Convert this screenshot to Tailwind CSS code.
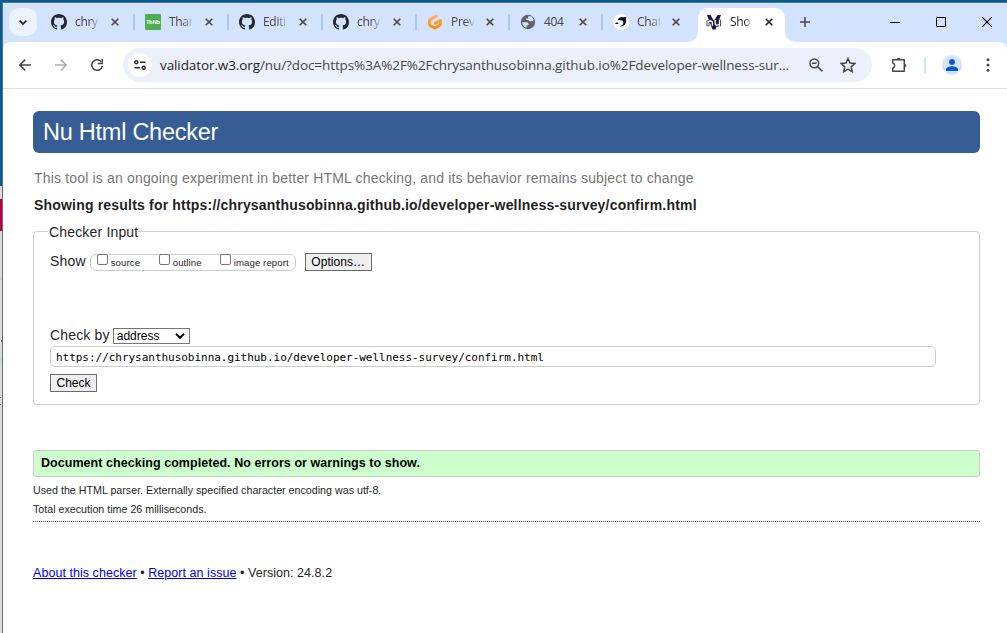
<!DOCTYPE html>
<html lang="en">
<head>
<meta charset="utf-8">
<title>Nu Html Checker</title>
<script src="https://cdn.jsdelivr.net/npm/@tailwindcss/browser@4"></script>
</head>
<body class="w-[1007px] h-[633px] overflow-hidden bg-[#005f96] flex flex-col">
<svg class="hidden">
  <symbol id="gh" viewBox="0 0 16 16"><path fill="#24292f" d="M8 0C3.58 0 0 3.58 0 8c0 3.54 2.29 6.53 5.47 7.59.4.07.55-.17.55-.38 0-.19-.01-.82-.01-1.49-2.01.37-2.53-.49-2.69-.94-.09-.23-.48-.94-.82-1.13-.28-.15-.68-.52-.01-.53.63-.01 1.08.58 1.23.82.72 1.21 1.87.87 2.33.66.07-.52.28-.87.51-1.07-1.78-.2-3.64-.89-3.64-3.95 0-.87.31-1.59.82-2.15-.08-.2-.36-1.02.08-2.12 0 0 .67-.21 2.2.82.64-.18 1.32-.27 2-.27s1.36.09 2 .27c1.53-1.04 2.2-.82 2.2-.82.44 1.1.16 1.92.08 2.12.51.56.82 1.27.82 2.15 0 3.07-1.87 3.75-3.65 3.95.29.25.54.73.54 1.48 0 1.07-.01 1.93-.01 2.2 0 .21.15.46.55.38A8.01 8.01 0 0 0 16 8c0-4.42-3.58-8-8-8z"/></symbol>
  <symbol id="x" viewBox="0 0 8 8"><path d="M.7.7l6.6 6.6M7.3.7L.7 7.3" stroke="currentColor" stroke-width="1.6" fill="none"/></symbol>
</svg>

<div class="h-[2px] shrink-0"></div>
<div class="flex flex-1 min-h-0">
  <!-- sliver of the window behind -->
  <div class="w-[2px] shrink-0 flex flex-col bg-[#dcdcdc]">
    <div class="h-[184px] bg-[#005f96]"></div>
    <div class="h-[13px] bg-[#dcdcdc]"></div>
    <div class="h-8 bg-[#b00048]"></div>
    <div class="h-[47px]"></div>
    <div class="h-[2px] bg-[#cfcfcf]"></div>
    <div class="h-[60px]"></div>
    <div class="h-[2px] bg-[#8a6a30] ml-px"></div>
    <div class="h-[16px]"></div>
    <div class="h-[6px] bg-[#c4dcdc]"></div>
    <div class="h-[33px]"></div>
    <div class="h-px w-px bg-[#2a7ad0]"></div>
    <div class="h-[6px]"></div>
    <div class="h-px w-px bg-[#2a7ad0]"></div>
  </div>

  <div class="flex-1 min-w-0 flex flex-col border-l border-t border-[#6b6b6b] bg-white font-['Open_Sans','Noto_Sans',sans-serif]">
    <!-- tab strip -->
    <div class="h-[39px] shrink-0 bg-[#d3e2fd] flex items-start text-[12px] tracking-[-0.3px] text-[#474747]">
      <div class="w-7 h-7 mt-[5px] ml-[6px] rounded-[10px] bg-[#ecf2fe] flex items-center justify-center">
        <svg class="w-2 h-[5px]" viewBox="0 0 8 5"><path d="M.6.7L4 4 7.4.7" fill="none" stroke="#1f1f1f" stroke-width="1.7"/></svg>
      </div>
      <div class="flex h-[39px] pl-[6px]">
        <div class="w-[94px] h-[38px] flex items-center pl-2 pr-[2px]"><svg class="w-4 h-4"><use href="#gh"/></svg><span class="w-[23px] ml-2 whitespace-nowrap mask-r-from-60% mask-r-to-110%">chry</span><svg class="w-2 h-2 ml-[13px]"><use href="#x"/></svg><i class="w-[2px] h-4 ml-auto bg-[#a8c7fa]"></i></div>
        <div class="w-[94px] h-[38px] flex items-center pl-2 pr-[2px]"><span class="w-4 h-4 bg-[#4caf50] rounded-[1px] text-white text-[5.5px] font-bold flex items-center justify-center">ThNb</span><span class="w-[23px] ml-2 whitespace-nowrap mask-r-from-60% mask-r-to-110%">Thar</span><svg class="w-2 h-2 ml-[13px]"><use href="#x"/></svg><i class="w-[2px] h-4 ml-auto bg-[#a8c7fa]"></i></div>
        <div class="w-[94px] h-[38px] flex items-center pl-2 pr-[2px]"><svg class="w-4 h-4"><use href="#gh"/></svg><span class="w-[23px] ml-2 whitespace-nowrap mask-r-from-60% mask-r-to-110%">Editi</span><svg class="w-2 h-2 ml-[13px]"><use href="#x"/></svg><i class="w-[2px] h-4 ml-auto bg-[#a8c7fa]"></i></div>
        <div class="w-[94px] h-[38px] flex items-center pl-2 pr-[2px]"><svg class="w-4 h-4"><use href="#gh"/></svg><span class="w-[23px] ml-2 whitespace-nowrap mask-r-from-60% mask-r-to-110%">chry</span><svg class="w-2 h-2 ml-[13px]"><use href="#x"/></svg><i class="w-[2px] h-4 ml-auto bg-[#a8c7fa]"></i></div>
        <div class="w-[93px] h-[38px] flex items-center pl-2 pr-[2px]"><svg class="w-4 h-4" viewBox="0 0 16 16"><defs><linearGradient id="o" x1="0" x2="0" y1="0" y2="1"><stop stop-color="#ffb45b"/><stop offset="1" stop-color="#ff8a00"/></linearGradient></defs><path d="M9.4 1.9L3.4 5.2Q2.3 5.8 2.3 7v3.2q0 .9.8 1.4l3.6 2q1 .5 2 0l3.8-2.1q.9-.5.9-1.4V6.4L8.3 9.2" fill="none" stroke="url(#o)" stroke-width="2.9" stroke-linecap="round" stroke-linejoin="round"/></svg><span class="w-[23px] ml-2 whitespace-nowrap mask-r-from-60% mask-r-to-110%">Prev</span><svg class="w-2 h-2 ml-[12px]"><use href="#x"/></svg><i class="w-[2px] h-4 ml-auto bg-[#a8c7fa]"></i></div>
        <div class="w-[93px] h-[38px] flex items-center pl-2 pr-[2px]"><svg class="w-4 h-4" viewBox="0 0 16 16"><circle cx="8" cy="8" r="7.2" fill="#5f6368"/><path d="M8.2 2.2h3.2l2.4 3.5-1.2 1.6-2.8-.1-1.5-1.1H6.1V4.6h2zM2.1 8.2l5.2.1 1.3 1.5-.2 1.4-1.9.2v2.3l-2.1-.8-1.8-2.4z" fill="#d3e2fd"/></svg><span class="w-[23px] ml-2 whitespace-nowrap">404</span><svg class="w-2 h-2 ml-[12px]"><use href="#x"/></svg><i class="w-[2px] h-4 ml-auto bg-[#a8c7fa]"></i></div>
        <div class="w-[93px] h-[38px] flex items-center pl-2"><svg class="w-4 h-4" viewBox="0 0 16 16"><circle cx="8" cy="8" r="8" fill="#fff"/><path d="M5 6.2Q5.2 3.4 8.3 3.2L13.6 3 12.8 4.6Q14 7 12.6 9.6 11 12.6 6.6 12.6q3.6-1.2 3.8-4Q10.4 6.2 8 6.2z" fill="#0c0a35"/><path d="M1.8 9.8l1.6-1.3h1.8v1.6H3.6z" fill="#0c0a35"/></svg><span class="w-[23px] ml-2 whitespace-nowrap mask-r-from-60% mask-r-to-110%">Chat</span><svg class="w-2 h-2 ml-[12px]"><use href="#x"/></svg></div>
        <!-- active tab -->
        <div class="w-[87px] h-[34px] mt-[5px] bg-white rounded-t-[10px] flex items-start pt-[6px] pl-2 relative text-[#1f1f1f]">
          <svg class="absolute -left-[10px] bottom-0 w-[10px] h-[10px]" viewBox="0 0 10 10"><path d="M10 0v10H0A10 10 0 0 0 10 0z" fill="#fff"/></svg>
          <svg class="absolute -right-[10px] bottom-0 w-[10px] h-[10px]" viewBox="0 0 10 10"><path d="M0 0v10h10A10 10 0 0 1 0 0z" fill="#fff"/></svg>
          <svg class="w-4 h-4" viewBox="0 0 16 16"><path d="M1 1h3.5L8 7l3.5-6H15L9.5 15.5h-3z" fill="#191650"/><path d="M2 12.2V6.6m0 1.6q1-1.2 2.6-1.2 1.8.2 1.8 1.8v3.4M9.2 5.8v3.8q0 1.6 1.6 1.6t2.8-1.4m0-4v6.4" fill="none" stroke="#26263a" stroke-width="2.9"/><path d="M2 11.7V6.8m0 1.4q1-1.2 2.6-1.2 1.8.2 1.8 1.8v2.9M9.2 6v3.6q0 1.6 1.6 1.6t2.8-1.4m0-3.8v5.7" fill="none" stroke="#fff" stroke-width="1.3"/></svg>
          <span class="w-[23px] ml-2 leading-4 whitespace-nowrap mask-r-from-60% mask-r-to-110%">Sho</span><svg class="w-2 h-2 ml-3 mt-1"><use href="#x"/></svg>
        </div>
      </div>
      <svg class="w-[10px] h-[10px] mt-[14px] ml-[15px]" viewBox="0 0 10 10"><path d="M5 0v10M0 5h10" stroke="#474747" stroke-width="1.5"/></svg>
      <div class="flex items-center h-[38px] ml-auto pr-[15px] gap-[36px]">
        <svg class="w-[10px] h-[10px]" viewBox="0 0 10 10"><path d="M0 5.5h10" stroke="#000"/></svg>
        <svg class="w-[10px] h-[10px]" viewBox="0 0 10 10"><path d="M.5.5h9v9h-9z" fill="none" stroke="#000"/></svg>
        <svg class="w-[10px] h-[10px]" viewBox="0 0 10 10"><path d="M0 0l10 10M10 0L0 10" stroke="#000" stroke-width="1.1"/></svg>
      </div>
    </div>

    <!-- toolbar -->
    <div class="bg-[#d3e2fd] shrink-0">
    <div class="h-[47px] bg-white rounded-t-[8px] border-b border-[#dfe1e5] flex items-center">
      <svg class="w-3 h-3 ml-4" viewBox="0 0 12 12"><path d="M6.2.6L.9 6l5.3 5.4M1 6h11" fill="none" stroke="#474747" stroke-width="1.5"/></svg>
      <svg class="w-3 h-3 ml-6" viewBox="0 0 12 12"><path d="M5.8.6L11.1 6l-5.3 5.4M11 6H0" fill="none" stroke="#acacac" stroke-width="1.5"/></svg>
      <svg class="w-3 h-3 ml-6" viewBox="0 0 12 12"><path d="M10.3 2.8A5.3 5.3 0 1 0 11.3 7" fill="none" stroke="#474747" stroke-width="1.5"/><path d="M11.3 0v4.6H6.7" fill="none" stroke="#474747" stroke-width="1.5"/></svg>
      <div class="w-[749px] h-[34px] ml-5 rounded-full bg-[#ebf0fa] flex items-center">
        <div class="w-6 h-6 ml-[5px] rounded-full bg-white flex items-center justify-center">
          <svg class="w-3 h-[10px]" viewBox="0 0 12 10" fill="none" stroke="#2b2b2b" stroke-width="1.4"><circle cx="2.3" cy="2.2" r="1.5"/><path d="M5.8 2.2H11.5M.5 7.8h5.7"/><circle cx="9.7" cy="7.8" r="1.5"/></svg>
        </div>
        <div class="w-[632px] ml-2 text-[13.5px] tracking-[-0.095px] whitespace-nowrap text-[#474747]"><span class="text-[#1f1f1f]">validator.w3.org</span>/nu/?doc=https%3A%2F%2Fchrysanthusobinna.github.io%2Fdeveloper-wellness-sur...</div>
        <svg class="w-[14px] h-[14px] ml-[17px]" viewBox="0 0 14 14" fill="none" stroke="#474747" stroke-width="1.5"><circle cx="5.3" cy="5.3" r="4.4"/><path d="M8.5 8.5l4.9 4.9M3 5.3h4.6"/></svg>
        <svg class="w-4 h-4 ml-[17px]" viewBox="0 0 14 14"><path d="M7 1.3l1.7 4 4.3.4-3.2 2.9.9 4.2L7 10.6l-3.7 2.2.9-4.2L1 5.7l4.3-.4z" fill="none" stroke="#474747" stroke-width="1.3"/></svg>
      </div>
      <svg class="w-[17px] h-[17px] ml-[19px] -mt-px" viewBox="0 0 17 17"><path d="M1.7 3.7h11.6v11.6H1.7v-3.2q2-.6 2-2.6t-2-2.6z" fill="none" stroke="#474747" stroke-width="1.5" stroke-linejoin="round"/><path d="M5.6 3.4a2 2 0 0 1 3.8 0zM13.6 7.6a2 2 0 0 1 0 3.8z" fill="#474747" stroke="#474747" stroke-width=".5"/></svg>
      <i class="w-[2px] h-4 ml-4 bg-[#d3e2fd]"></i>
      <div class="w-5 h-5 ml-4 rounded-full bg-[#d3e2fd] flex items-center justify-center"><svg class="w-3 h-3" viewBox="0 0 12 12" fill="#0b57d0"><circle cx="6" cy="2.9" r="2.9"/><path d="M0 12v-1.8C0 8.2 3.5 7.2 6 7.2s6 1 6 3V12z"/></svg></div>
      <svg class="w-1 h-[14px] ml-6" viewBox="0 0 4 14" fill="#474747"><circle cx="2" cy="1.8" r="1.5"/><circle cx="2" cy="7" r="1.5"/><circle cx="2" cy="12.2" r="1.5"/></svg>
    </div>
    </div>

    <!-- page -->
    <main class="flex-1 pl-[30px] pr-[27px] pt-[22px] text-[#1f1f1f] font-['Liberation_Sans',Arial,sans-serif] flex flex-col items-stretch">
      <h1 class="h-[42px] rounded-[6px] bg-[#365d95] text-white text-[23.5px] tracking-[-0.25px] leading-[42px] pl-[10px]">Nu Html Checker</h1>
      <p class="mt-[17px] text-[14px] leading-4 tracking-[0.17px] text-[#767676] pl-px">This tool is an ongoing experiment in better HTML checking, and its behavior remains subject to change</p>
      <h2 class="mt-[11px] text-[14px] leading-4 font-bold tracking-[0.19px] pl-px">Showing results for https://chrysanthusobinna.github.io/developer-wellness-survey/confirm.html</h2>
      <fieldset class="mt-[11px] h-[181px] border border-[#ccc] rounded-[4px] pl-4 pr-[43px] text-[14px] tracking-[0.17px]">
        <legend class="-ml-[2px] pl-px h-[15px] leading-4">Checker Input</legend>
        <div class="flex items-center h-[19px] mt-[13px]">
          <span>Show</span>
          <div class="ml-1 mt-px w-[206px] h-[17px] border border-[#ccc] rounded-[6px] flex items-center text-[9.6px] tracking-[0.1px] pl-[6px]">
            <i class="w-[11px] h-[11px] border border-[#767676] rounded-[2px] -mt-[5px] bg-white"></i><span class="ml-[3px] mt-[2px] w-[48px]">source</span>
            <i class="w-[11px] h-[11px] border border-[#767676] rounded-[2px] -mt-[5px] bg-white"></i><span class="ml-[3px] mt-[2px] w-[47px]">outline</span>
            <i class="w-[11px] h-[11px] border border-[#767676] rounded-[2px] -mt-[5px] bg-white"></i><span class="ml-[3px] mt-[2px] whitespace-nowrap">image report</span>
          </div>
          <button class="ml-[9px] w-[67px] h-[18px] border border-[#6b6b6b] bg-[#efefef] text-black text-[12px] leading-4 tracking-[0.05px]">Options…</button>
        </div>
        <div class="flex items-center h-4 mt-[57px]">
          <span class="-mt-px">Check by</span>
          <div class="ml-[3px] w-[77px] h-4 border border-[#767676] text-black text-[12px] leading-[14px] tracking-[0px] flex items-center justify-between pl-[3px] pr-1"><span>address</span><svg class="w-[10px] h-[6px]" viewBox="0 0 10 6"><path d="M1 .8l4 4 4-4" fill="none" stroke="#000" stroke-width="2"/></svg></div>
        </div>
        <div class="mt-[2px] h-[21px] border border-[#ccc] rounded-[5px] pl-[5px] text-black font-['DejaVu_Sans_Mono',monospace] text-[11px] leading-[21px] tracking-[-0.03px]">https://chrysanthusobinna.github.io/developer-wellness-survey/confirm.html</div>
        <button class="mt-[7px] block w-[47px] h-[18px] border border-[#6b6b6b] bg-[#efefef] text-black text-[12px] leading-4 tracking-[0px]">Check</button>
      </fieldset>
      <p class="mt-[45px] h-[27px] bg-[#cfc] border border-[#ccc] rounded-[3px] pl-[7px] text-black font-bold text-[12.5px] leading-[24px] tracking-[0.05px]">Document checking completed. No errors or warnings to show.</p>
      <p class="mt-[7px] text-[10.7px] leading-[13px]">Used the HTML parser. Externally specified character encoding was utf-8.</p>
      <p class="mt-[6px] text-[10.7px] leading-[13px]">Total execution time 26 milliseconds.</p>
      <div class="mt-[5px] h-px bg-[repeating-linear-gradient(90deg,#555_0_1px,transparent_1px_2px)]"></div>
      <p class="mt-[43px] text-[12.5px] leading-4 tracking-[0.05px]"><a class="underline text-[#0000ee]">About this checker</a> • <a class="underline text-[#0000ee]">Report an issue</a> • Version: 24.8.2</p>
    </main>
  </div>
</div>
</body>
</html>
